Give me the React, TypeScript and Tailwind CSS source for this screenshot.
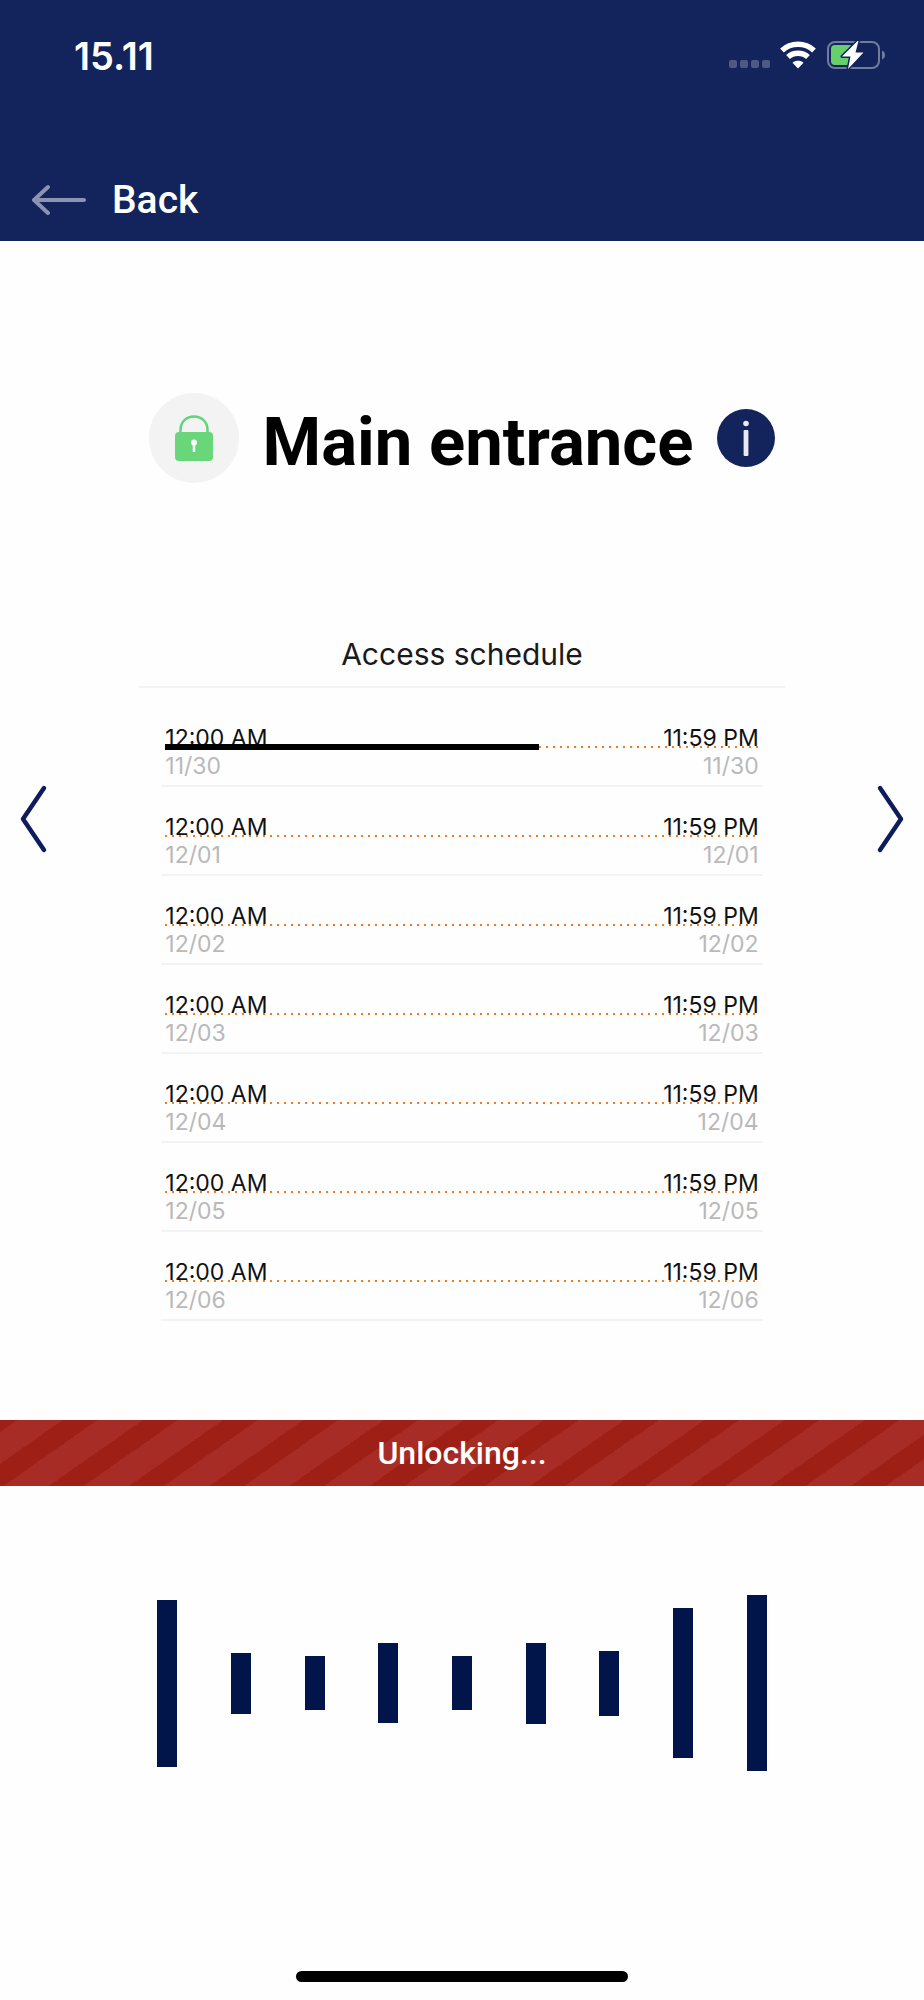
const schedule = ["11/30", "12/01", "12/02", "12/03", "12/04", "12/05", "12/06"];
const bars = [167, 61, 54, 80, 54, 81, 65, 150, 176];

function StatusBar() {
  return (
    <div className="flex items-start justify-between pl-[74px] pr-[38px] pt-8 text-white">
      <span className="font-['Inter',sans-serif] text-[38px] leading-[48px] font-semibold">15.11</span>
      <div className="flex items-center gap-[10px] pt-2">
        <div className="flex gap-[3px] pt-[18px]">
          <i className="size-2 rounded-xs bg-white/25" />
          <i className="size-2 rounded-xs bg-white/25" />
          <i className="size-2 rounded-xs bg-white/25" />
          <i className="size-2 rounded-xs bg-white/25" />
        </div>
        <svg width="36" height="30" viewBox="0 0 36 30" fill="none" stroke="white" aria-hidden="true">
          <path d="M2 10.500C11 2.200 25 2.200 34 10.500" strokeWidth="5.500" />
          <path d="M8 17C13.500 12 22.500 12 28 17" strokeWidth="5.500" />
          <path d="M18 28.500L12.500 22.800C15.500 20.200 20.500 20.200 23.500 22.800Z" fill="white" stroke="none" />
        </svg>
        <svg width="60" height="30" viewBox="0 0 60 30" fill="none" aria-hidden="true">
          <rect x="2" y="2" width="51" height="26" rx="7" stroke="#717b9d" strokeWidth="2" />
          <path d="M56 10.500C60 12 60 18 56 19.500Z" fill="#717b9d" />
          <rect x="5" y="5" width="22" height="20" rx="4" fill="#66d16a" />
          <path d="M31.500 1L16 16.500H24.500L22 29L37.500 12.500H29.500L32.500 1Z" fill="white" stroke="#13235b" strokeWidth="3" strokeLinejoin="round" paintOrder="stroke" />
        </svg>
      </div>
    </div>
  );
}

function ScheduleRow({ date, active }: { date: string; active: boolean }) {
  return (
    <li className="flex h-[89px] flex-col justify-end border-b-2 border-[#f3f3f3] px-1 pb-[5px] text-[23px] leading-[28px]">
      <div className="relative flex justify-between text-[#111]">
        <span>12:00 AM</span>
        <span>11:59 PM</span>
        {/* timeline runs over the foot of the hours */}
        <div className="absolute inset-x-0 top-5 flex h-[6px] items-center">
          {active && <div className="h-full w-[63%] bg-black" />}
          <div className="h-[2px] flex-1 bg-[repeating-linear-gradient(90deg,#ef7a1f_0_2px,transparent_2px_7px)]" />
        </div>
      </div>
      <div className="flex justify-between text-[#b9b9b9]">
        <span>{date}</span>
        <span>{date}</span>
      </div>
    </li>
  );
}

export default function App() {
  return (
    <div className="min-h-screen bg-[#fefefe] font-['Inter',sans-serif] text-black">
      <header className="h-[241px] bg-[#13235b]">
        <StatusBar />
        <button className="mt-24 flex items-center gap-[26px] pl-8 font-['Roboto',sans-serif] text-[39px] leading-[48px] font-medium text-white">
          <svg width="54" height="32" viewBox="0 0 54 32" fill="none" stroke="#8b93b0" strokeWidth="4" strokeLinecap="round" strokeLinejoin="round" aria-hidden="true">
            <path d="M16 3L2 16L16 29M2 16H52" />
          </svg>
          Back
        </button>
      </header>

      <main>
        <div className="flex items-center justify-center gap-6 pt-[152px]">
          <div className="flex size-[90px] items-center justify-center rounded-full bg-[#f3f3f3]">
            <svg width="38" height="46" viewBox="0 0 38 46" fill="none" aria-hidden="true">
              <path d="M5.500 19V15C5.500 -3 32.500 -3 32.500 15V19" stroke="#5fd67a" strokeWidth="2.500" />
              <rect y="17" width="38" height="29" rx="4" fill="#69d779" />
              <circle cx="19" cy="27.500" r="3" fill="white" />
              <path d="M19 28V37" stroke="white" strokeWidth="2.500" />
            </svg>
          </div>
          <h1 className="pt-2 font-['Roboto',sans-serif] text-[67px] leading-[82px] font-bold">Main entrance</h1>
          <button aria-label="Info" className="flex size-[58px] items-center justify-center rounded-full bg-[#13235b]">
            <svg width="10" height="36" viewBox="0 0 10 36" fill="#e8e9f1" aria-hidden="true">
              <circle cx="5" cy="3.500" r="2.800" />
              <rect x="2.600" y="10" width="4.800" height="26" rx="1" />
            </svg>
          </button>
        </div>

        <section className="flex items-start justify-between px-5 pt-[147px]">
          <button aria-label="Previous" className="mt-[154px]">
            <svg width="28" height="70" viewBox="0 0 28 70" fill="none" stroke="#0f1c5c" strokeWidth="4.500" strokeLinecap="round" strokeLinejoin="round" aria-hidden="true">
              <path d="M24 4L3 35L24 66" />
            </svg>
          </button>
          <div className="w-[73%]">
            <h2 className="border-b-2 border-[#f3f3f3] pb-2 text-center text-[30px] leading-[48px] text-[#1a1a1a]">Access schedule</h2>
            <ul className="mt-[10px] px-[22px]">
              {schedule.map((date, index) => (
                <ScheduleRow key={date} date={date} active={index === 0} />
              ))}
            </ul>
          </div>
          <button aria-label="Next" className="mt-[154px]">
            <svg width="28" height="70" viewBox="0 0 28 70" fill="none" stroke="#0f1c5c" strokeWidth="4.500" strokeLinecap="round" strokeLinejoin="round" aria-hidden="true">
              <path d="M4 4L25 35L4 66" />
            </svg>
          </button>
        </section>

        <div className="mt-[99px] bg-[repeating-linear-gradient(145deg,#9e1f15_0_10px,#a72c25_10px_36px,#9e1f15_36px_46px)] text-center font-['Roboto',sans-serif] text-[32px] leading-[66px] font-medium text-white">
          Unlocking...
        </div>

        <div className="mx-auto mt-[109px] flex h-44 w-[66%] items-center justify-between">
          {bars.map((height, index) => (
            <i key={index} className="w-5 bg-[#02154b]" style={{ height }} />
          ))}
        </div>
      </main>

      <div className="mx-auto mt-[200px] h-[11px] w-[36%] rounded-full bg-black" />
    </div>
  );
}
